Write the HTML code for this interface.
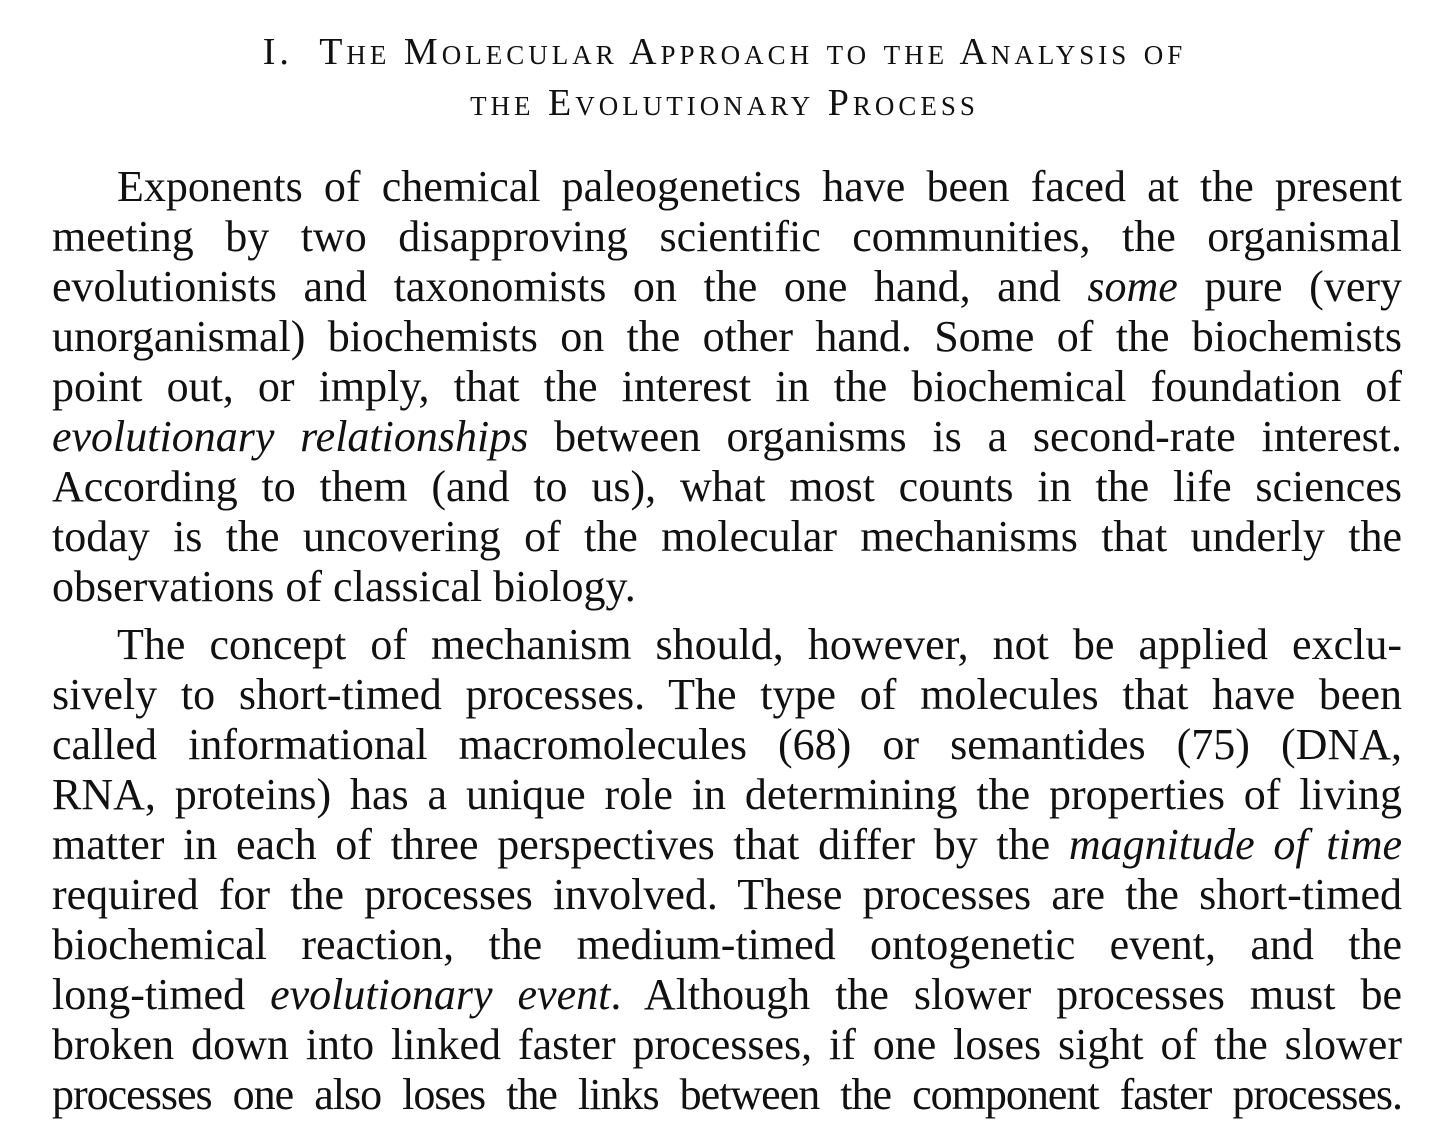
<!DOCTYPE html>
<html><head><meta charset="utf-8"><style>
html,body{margin:0;padding:0;background:#fff;}
body{width:1449px;height:1127px;position:relative;overflow:hidden;font-family:"Liberation Serif",serif;color:#111;}
.t{position:absolute;left:0;width:1449px;text-align:center;font-variant:small-caps;font-size:38px;letter-spacing:4px;line-height:40px;}
.l{position:absolute;left:52px;width:1350px;font-size:44px;line-height:50px;height:50px;text-align:justify;text-align-last:justify;white-space:nowrap;}
.l.i1{left:117px;width:1285px;}
.l.e{text-align:left;text-align-last:left;}
.l.k{letter-spacing:-1px;}
</style></head><body>
<div class="t" style="top:32px;">I.&nbsp; The Molecular Approach to the Analysis of</div>
<div class="t" style="top:83px;">the Evolutionary Process</div>

<div class="l i1" style="top:162px;">Exponents of chemical paleogenetics have been faced at the present</div>
<div class="l" style="top:212px;">meeting by two disapproving scientific communities, the organismal</div>
<div class="l" style="top:262px;">evolutionists and taxonomists on the one hand, and <i>some</i> pure (very</div>
<div class="l" style="top:312px;">unorganismal) biochemists on the other hand. Some of the biochemists</div>
<div class="l" style="top:362px;">point out, or imply, that the interest in the biochemical foundation of</div>
<div class="l" style="top:412px;"><i>evolutionary relationships</i> between organisms is a second-rate interest.</div>
<div class="l" style="top:462px;">According to them (and to us), what most counts in the life sciences</div>
<div class="l" style="top:512px;">today is the uncovering of the molecular mechanisms that underly the</div>
<div class="l e" style="top:562px;">observations of classical biology.</div>

<div class="l i1" style="top:620px;">The concept of mechanism should, however, not be applied exclu-</div>
<div class="l" style="top:670px;">sively to short-timed processes. The type of molecules that have been</div>
<div class="l" style="top:720px;">called informational macromolecules (68) or semantides (75) (DNA,</div>
<div class="l" style="top:770px;">RNA, proteins) has a unique role in determining the properties of living</div>
<div class="l" style="top:820px;">matter in each of three perspectives that differ by the <i>magnitude of time</i></div>
<div class="l" style="top:870px;">required for the processes involved. These processes are the short-timed</div>
<div class="l" style="top:920px;">biochemical reaction, the medium-timed ontogenetic event, and the</div>
<div class="l" style="top:970px;">long-timed <i>evolutionary event</i>. Although the slower processes must be</div>
<div class="l" style="top:1020px;">broken down into linked faster processes, if one loses sight of the slower</div>
<div class="l k" style="top:1070px;">processes one also loses the links between the component faster processes.</div>
</body></html>
